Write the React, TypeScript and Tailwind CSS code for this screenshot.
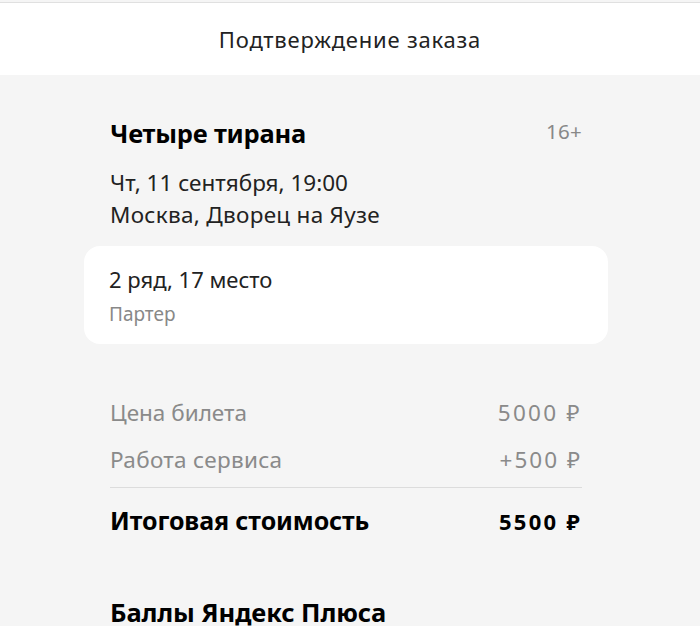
export default function App() {
  const font = { fontFamily: '"Noto Sans", "Open Sans", sans-serif' };

  return (
    <div className="min-h-[626px] bg-[#f5f5f5] text-black" style={font}>
      {/* Header */}
      <div className="h-[2px] bg-[#f5f5f5]" />
      <header className="flex h-[73px] items-center justify-center border-t border-[#e0e0e0] bg-white">
        <h1 className="text-[22px] text-[#222] tracking-[0.8px]">Подтверждение заказа</h1>
      </header>

      <main className="ml-[84px] w-[524px] pt-[40px]">
        {/* Event */}
        <div className="px-[26px]">
          <div className="flex items-start justify-between">
            <h2 className="text-[25.5px] font-bold leading-[36px] tracking-[-0.2px]">Четыре тирана</h2>
            <span className="text-[20.5px] leading-[32px] tracking-[0.3px] text-[#888]">16+</span>
          </div>
          <div className="mt-[16px] text-[22.5px] leading-[32px] text-[#222]">
            <div>Чт, 11 сентября, 19:00</div>
            <div className="tracking-[0.3px]">Москва, Дворец на Яузе</div>
          </div>
        </div>

        {/* Seat card */}
        <div className="mt-[15px] h-[98px] rounded-[16px] bg-white px-[25px] pt-[19px]">
          <div className="text-[22px] leading-[28px] text-[#222]">2 ряд, 17 место</div>
          <div className="mt-[10px] text-[19px] leading-[22px] text-[#888]">Партер</div>
        </div>

        {/* Prices */}
        <div className="mt-[54px] px-[26px]">
          <div className="flex h-[30px] items-center justify-between text-[22.5px] text-[#8a8a8a]">
            <span>Цена билета</span>
            <span className="tracking-[2.3px]">5000 ₽</span>
          </div>
          <div className="mt-[17px] flex h-[30px] items-center justify-between text-[22.5px] text-[#8a8a8a]">
            <span className="tracking-[0.3px]">Работа сервиса</span>
            <span className="tracking-[2px]">+500 ₽</span>
          </div>
          <div className="mt-[12px] h-px bg-[#dcdcdc]" />
          <div className="mt-[16px] flex h-[34px] items-center justify-between">
            <span className="text-[25px] font-bold tracking-[-0.1px]">Итоговая стоимость</span>
            <span className="text-[22px] font-bold tracking-[2.3px]">5500 ₽</span>
          </div>

          <h2 className="mt-[57px] text-[25.5px] font-bold leading-[34px] tracking-[-0.1px]">Баллы Яндекс Плюса</h2>
        </div>
      </main>
    </div>
  );
}
